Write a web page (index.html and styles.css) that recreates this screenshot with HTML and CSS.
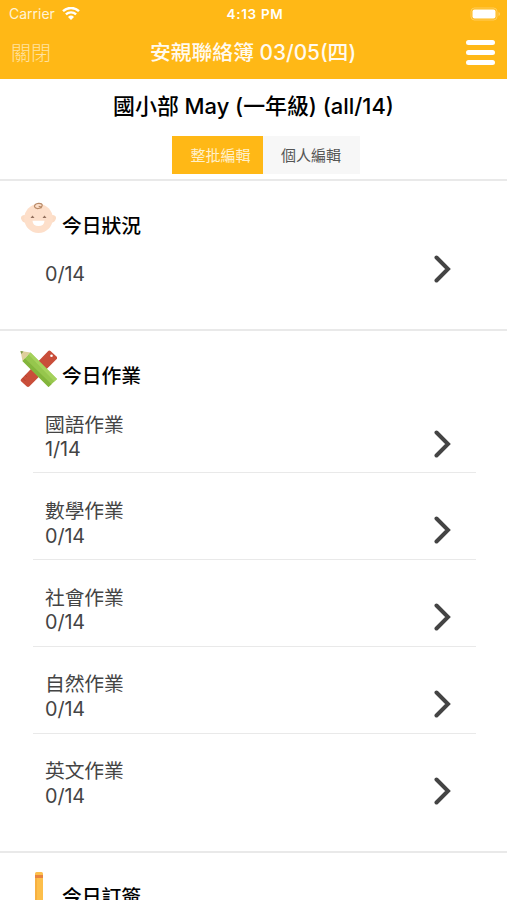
FILE: index.html
```
<!DOCTYPE html>
<html lang="zh-Hant">

<head>
  <meta charset="UTF-8" />
  <meta name="viewport" content="width=device-width, initial-scale=1.0" />
  <title>安親聯絡簿</title>
  <link rel="stylesheet" href="styles.css">
</head>

<body>
  <!-- 頂部 -->
  <header class="header">
    <div class="status">
      <div class="carrier">
        <span>Carrier</span>
        <svg class="wifi" width="18" height="14" viewBox="0 0 18 14">
          <path d="M1 4.200a11.500 11.500 0 0 1 16 0M3.900 7.400a7.400 7.400 0 0 1 10.200 0" fill="none" stroke="#fff" stroke-width="2.400" />
          <path d="M9 12.900L6 9.900a4.400 4.400 0 0 1 6 0z" fill="#fff" />
        </svg>
      </div>
      <span class="time">4:13 PM</span>
      <svg class="battery" width="31" height="14" viewBox="0 0 31 14">
        <rect x="1" y="1" width="26" height="12" rx="3.5" fill="none" stroke="#fff" stroke-opacity=".3" />
        <rect x="2.500" y="2.500" width="23" height="9" rx="2" fill="#fff" />
        <path d="M28.5 5v4q1.5-.6 1.5-2t-1.5-2z" fill="#fff" fill-opacity=".35" />
      </svg>
    </div>
    <div class="nav">
      <a class="close">關閉</a>
      <h1>安親聯絡簿 03/05(四)</h1>
      <div class="menu"><i></i><i></i><i></i></div>
    </div>
  </header>

  <!-- 班級和編輯方式 -->
  <div class="class-info">
    <h2>國小部 May (一年級) (all/14)</h2>
    <div class="tabs">
      <span class="tab active">整批編輯</span>
      <span class="tab">個人編輯</span>
    </div>
  </div>

  <section class="section status-section">
    <div class="section-title">
      <svg class="icon" width="38" height="38" viewBox="0 0 38 38">
        <path d="M6 15Q1.500 15 2 18.500q1 4 5.500 4.500zM33 15q4.500 0 4 3.500q-1 4-5.500 4.500z" fill="#fbdcc5" />
        <ellipse cx="19.500" cy="18.500" rx="14.300" ry="14.500" fill="#fddfca" />
        <path d="M23 7.500q-6 2.500-7.500-.7q-.3-3 4-3.400q4-.2 3.700 2.300q-.8 1.800-3.500.6" fill="none" stroke="#b98b68" stroke-width="1.200" />
        <path d="M11.500 18l2-2.600 2 2.600zM23.500 18l2-2.600 2 2.600z" fill="#93705d" />
        <path d="M13.500 20.800h12q-.3 5.200-6 5.200t-6-5.200z" fill="#fff" />
      </svg>
      <h3>今日狀況</h3>
    </div>
    <div class="item">
      <div class="text">
        <p>0/14</p>
      </div>
      <svg class="arrow" width="18" height="28" viewBox="0 0 18 28"><path d="M2.500 2.500L14 14 2.500 25.500" /></svg>
    </div>
  </section>

  <section class="section work-section">
    <div class="section-title">
      <svg class="icon" width="38" height="38" viewBox="0 0 38 38">
        <path d="M31.500 1l6 5.500q1.500 1.300.2 2.600L10.500 36.200q-1.500 1.400-3 0L2.300 31.500q-1.300-1.300 0-2.600L29 1.200q1.200-1.200 2.500-.2z" fill="#c94e3a" />
        <path d="M6 25l2 2M3.500 28l3 3" stroke="#b5432f" />
        <circle cx="32.500" cy="5.800" r="1.300" fill="#fff" />
        <path d="M1.500 1l10 1.500-8 8.500z" fill="#dfcf9c" />
        <path d="M1.500 1l3 .6-2.200 2.500z" fill="#7d9a4a" />
        <path d="M11.500 2.500L38 29l-8.500 8L3.500 11z" fill="#96c64d" />
        <path d="M3.500 11l2.500-2.500L32.500 34.300l-3 2.700z" fill="#83b53c" />
        <path d="M9.500 4.500l2-2L38 29l-2.600 2.400z" fill="#a5d25c" />
      </svg>
      <h3>今日作業</h3>
    </div>
    <div class="item">
      <div class="text">
        <p>國語作業</p>
        <p>1/14</p>
      </div>
      <svg class="arrow" width="18" height="28" viewBox="0 0 18 28"><path d="M2.500 2.500L14 14 2.500 25.500" /></svg>
    </div>
    <div class="item">
      <div class="text">
        <p>數學作業</p>
        <p>0/14</p>
      </div>
      <svg class="arrow" width="18" height="28" viewBox="0 0 18 28"><path d="M2.500 2.500L14 14 2.500 25.500" /></svg>
    </div>
    <div class="item">
      <div class="text">
        <p>社會作業</p>
        <p>0/14</p>
      </div>
      <svg class="arrow" width="18" height="28" viewBox="0 0 18 28"><path d="M2.500 2.500L14 14 2.500 25.500" /></svg>
    </div>
    <div class="item">
      <div class="text">
        <p>自然作業</p>
        <p>0/14</p>
      </div>
      <svg class="arrow" width="18" height="28" viewBox="0 0 18 28"><path d="M2.500 2.500L14 14 2.500 25.500" /></svg>
    </div>
    <div class="item">
      <div class="text">
        <p>英文作業</p>
        <p>0/14</p>
      </div>
      <svg class="arrow" width="18" height="28" viewBox="0 0 18 28"><path d="M2.500 2.500L14 14 2.500 25.500" /></svg>
    </div>
  </section>

  <section class="section sign-section">
    <div class="section-title">
      <svg class="icon" width="38" height="38" viewBox="0 0 38 38">
        <path d="M16 1.500q0-1.500 1.500-1.500h5q1.500 0 1.500 1.500V31l-4 6-4-6z" fill="#fdbf4b" />
        <path d="M16 3h8v3h-8z" fill="#e8843f" />
        <path d="M16 6h2v25h-2z" fill="#f7b040" />
      </svg>
      <h3>今日訂簽</h3>
    </div>
  </section>
</body>

</html>
```
FILE: styles.css
```
* {
  margin: 0;
  padding: 0;
  box-sizing: border-box;
}

body {
  height: 900px;
  overflow: hidden;
  background: #fff;
  color: #444;
  font-family: Inter, "Noto Sans CJK TC", sans-serif;
}

.header {
  height: 79px;
  background: #ffb816;
  color: #fff;
}

.status {
  display: grid;
  grid-template-columns: 1fr auto 1fr;
  align-items: center;
  height: 27px;
  padding: 0 6px 0 9px;
}

.carrier {
  display: flex;
  align-items: center;
  gap: 7px;
  color: #fff3d6;
  font-size: 14px;
}

.time {
  font-weight: 600;
  font-size: 13.5px;
  letter-spacing: 0.7px;
}

.battery {
  justify-self: end;
}

.nav {
  display: grid;
  grid-template-columns: 1fr auto 1fr;
  align-items: center;
  height: 50px;
  padding: 0 12px 0 11px;
}

.close {
  color: #ffe3a2;
  font-size: 20px;
  font-weight: 300;
}

.nav h1 {
  padding-top: 1px;
  color: #fffaf0;
  font-size: 20.8px;
  font-weight: 500;
  line-height: 30px;
}

.menu {
  display: flex;
  flex-direction: column;
  justify-self: end;
  gap: 5px;
  width: 29px;
}

.menu i {
  height: 5px;
  border-radius: 3px;
  background: #fff;
}

.class-info {
  height: 102px;
  padding-top: 11px;
  border-bottom: 2px solid #e9e9e9;
  text-align: center;
}

.class-info h2 {
  color: #000;
  font-size: 21.9px;
  font-weight: 500;
  line-height: 32px;
}

.tabs {
  display: flex;
  justify-content: center;
  margin: 14px 0 0 24px;
}

.tab {
  width: 97px;
  height: 38px;
  background: #f7f7f7;
  color: #555;
  font-size: 15px;
  line-height: 39px;
}

.tab.active {
  width: 91px;
  padding-left: 7px;
  background: #ffb816;
  color: #fff1cc;
}

.section {
  padding: 19px 31px 0 33px;
  border-bottom: 2px solid #e9e9e9;
}

.status-section {
  height: 150px;
}

.work-section {
  height: 522px;
}

.section-title {
  display: flex;
  gap: 5px;
  height: 50px;
  margin-left: -14px;
}

.section-title h3 {
  padding-top: 11px;
  color: #000;
  font-size: 19.8px;
  font-weight: 500;
  line-height: 30px;
}

.sign-section h3 {
  padding-top: 10px;
}

.item {
  display: flex;
  justify-content: space-between;
  height: 86.8px;
  padding: 12px 24px 0 12px;
  border-bottom: 1px solid #e9e9e9;
  font-size: 19.8px;
  line-height: 24.7px;
}

.item + .item {
  padding-top: 25.5px;
}

.item:last-child {
  border-bottom: none;
}

.work-section .item:nth-child(2) {
  height: 73.3px;
  padding-top: 12.5px;
}

.item p {
  letter-spacing: -0.1px;
}

.arrow {
  margin-top: 17.5px;
}

.status-section .arrow {
  margin-top: -7px;
}

.arrow path {
  fill: none;
  stroke: #444;
  stroke-width: 4;
  stroke-linecap: round;
}
```
